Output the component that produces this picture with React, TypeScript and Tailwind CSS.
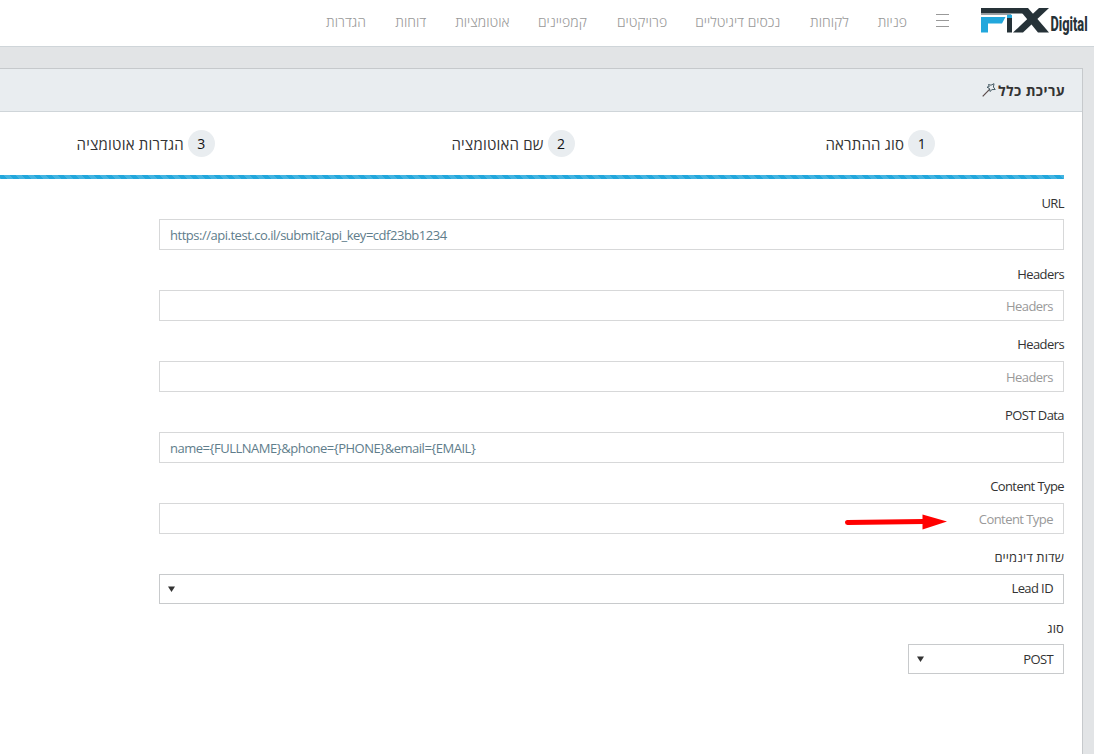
import type { ReactNode } from 'react';

const NAV: { label: string; width: string }[] = [
  { label: 'פניות', width: 'w-[30px]' },
  { label: 'לקוחות', width: 'w-[40px]' },
  { label: 'נכסים דיגיטליים', width: 'w-[85px]' },
  { label: 'פרויקטים', width: 'w-[52px]' },
  { label: 'קמפיינים', width: 'w-[49px]' },
  { label: 'אוטומציות', width: 'w-[55px]' },
  { label: 'דוחות', width: 'w-[32px]' },
  { label: 'הגדרות', width: 'w-[40px]' },
];

const STEPS = ['סוג ההתראה', 'שם האוטומציה', 'הגדרות אוטומציה'];

function Logo() {
  return (
    <svg width="109" height="32" viewBox="980 6 109 32" className="shrink-0 overflow-visible">
      <rect x="981" y="8" width="43" height="5.5" fill="#263238" />
      <rect x="981" y="13.8" width="30" height="1.2" fill="#9aa0a4" />
      <path d="M981 17H1005.5L1002 23.5H988V32.5H981Z" fill="#22a7dc" />
      <rect x="1007" y="18" width="5" height="14.5" fill="#263238" />
      <rect x="1007" y="14.8" width="5" height="3.2" fill="#22a7dc" />
      <path d="M1018 8H1028L1049 32.5H1038Z" fill="#263238" />
      <path d="M1039 8H1049L1023 32.5H1013Z" fill="#263238" />
      <text
        transform="translate(1050.4 31) scale(0.64 1)"
        direction="ltr"
        fill="#263238"
        className="font-['Roboto',sans-serif] text-[20px] font-extrabold"
      >
        Digital
      </text>
    </svg>
  );
}

function Wand() {
  return (
    <svg width="14" height="14" viewBox="0 0 14 14" fill="none" stroke="#455a64" strokeWidth="1">
      <path d="M0.7 13.3L8 5.8" stroke="#5a4a4a" strokeWidth="1.2" />
      <path d="M6.5 1.5L9 2.2L12 0.7L11.4 4L13.2 6.5L10 6.6L8 8.5L7.4 5.5L5 4.2L7.2 3.6Z" />
    </svg>
  );
}

function Field({ label, children }: { label: string; children: ReactNode }) {
  return (
    <div className="h-[70.83px]">
      <div className="mb-[6.65px] h-5 text-[13px] leading-5 text-[#333]">
        {/[a-z]/i.test(label) ? (
          <span dir="ltr" className="tracking-[-0.58px]">{label}</span>
        ) : (
          <span className="tracking-[0.1px]">{label}</span>
        )}
      </div>
      {children}
    </div>
  );
}

function TextInput({ value, placeholder }: { value?: string; placeholder?: string }) {
  return (
    <div
      dir={value ? 'ltr' : 'rtl'}
      className={`flex h-[31px] items-center border border-[#d7d8d9] px-2.5 pt-[2.5px] text-[13px] ${
        value ? 'tracking-[-0.48px] text-[#607d8b]' : 'tracking-[-0.55px] text-[#999]'
      }`}
    >
      <span dir="ltr" className="whitespace-nowrap">{value ?? placeholder}</span>
    </div>
  );
}

function Select({ value, narrow }: { value: string; narrow?: boolean }) {
  return (
    <div
      className={`flex h-[30px] items-center justify-between border border-[#c8cacc] pr-2.5 pl-2 text-[13px] text-[#333] ${
        narrow ? 'w-[156px]' : ''
      }`}
    >
      <span dir="ltr" className="pt-[1.4px] tracking-[-0.6px]">{value}</span>
      <svg width="7" height="6" viewBox="0 0 7 6">
        <path d="M0 0.5H7L3.5 6Z" fill="#333" />
      </svg>
    </div>
  );
}

export default function App() {
  return (
    <div
      dir="rtl"
      className="h-[754px] w-[1094px] overflow-hidden bg-[#e2e4e6] font-['Open_Sans','Noto_Sans',sans-serif]"
    >
      <header className="flex h-[47px] items-start border-b border-[#cfd5d9] bg-white pt-1.5 pr-[5px]">
        <Logo />
        <div className="mr-[31px] mt-[8px] flex h-[13px] w-[13px] flex-col justify-between">
          <span className="h-px bg-[#999]" />
          <span className="h-px bg-[#999]" />
          <span className="h-px bg-[#999]" />
        </div>
        <nav className="mr-[29px] flex gap-[28.3px] pt-1.5 text-sm leading-5 font-light text-[#999]">
          {NAV.map((item) => (
            <span key={item.label} className={`whitespace-nowrap ${item.width}`}>
              {item.label}
            </span>
          ))}
        </nav>
      </header>

      <main className="mt-[21px] mr-[11px] h-[700px] w-[1140px] border border-[#c6c9cc] bg-white">
        <div className="flex h-[43px] items-center gap-0.5 border-b border-[#cfd5d9] bg-[#e9edf0] pr-[17px]">
          <h1 className="pt-0.5 text-sm font-bold tracking-[0.4px] text-[#333]">עריכת כלל</h1>
          <Wand />
        </div>

        <div className="pr-[18px]">
          <ol className="flex h-[63px] w-[1102px] pt-[18px]">
            {STEPS.map((step, i) => (
              <li key={step} className="flex h-[27px] flex-1 items-center justify-center gap-1 text-[15px] text-[#333]">
                <span className="grid size-[27px] place-items-center rounded-full bg-[#e9edf0] text-sm text-[#111]">
                  {i + 1}
                </span>
                <span className="pt-0.5 tracking-[0.2px] whitespace-nowrap">{step}</span>
              </li>
            ))}
          </ol>
          <div className="h-1 bg-[#22a7dc] bg-[linear-gradient(45deg,rgba(255,255,255,0.15)_25%,transparent_25%,transparent_50%,rgba(255,255,255,0.15)_50%,rgba(255,255,255,0.15)_75%,transparent_75%)] bg-[length:12px_12px]" />

          <form className="w-[905px] pt-[13.75px]">
            <Field label="URL">
              <TextInput value="https://api.test.co.il/submit?api_key=cdf23bb1234" />
            </Field>
            <Field label="Headers">
              <TextInput placeholder="Headers" />
            </Field>
            <Field label="Headers">
              <TextInput placeholder="Headers" />
            </Field>
            <Field label="POST Data">
              <TextInput value="name={FULLNAME}&phone={PHONE}&email={EMAIL}" />
            </Field>
            <Field label="Content Type">
              <div className="relative">
                <TextInput placeholder="Content Type" />
                <svg width="104" height="18" viewBox="844 513 104 18" className="absolute top-2.5 right-[116px]">
                  <path d="M847.5 522.5L924 521.5" stroke="#f00" strokeWidth="5" strokeLinecap="round" />
                  <path d="M922.5 514.5L947 521.5L922.5 529.5Z" fill="#f00" />
                </svg>
              </div>
            </Field>
            <Field label="שדות דינמיים">
              <Select value="Lead ID" />
            </Field>
            <Field label="סוג">
              <Select value="POST" narrow />
            </Field>
          </form>
        </div>
      </main>
    </div>
  );
}
